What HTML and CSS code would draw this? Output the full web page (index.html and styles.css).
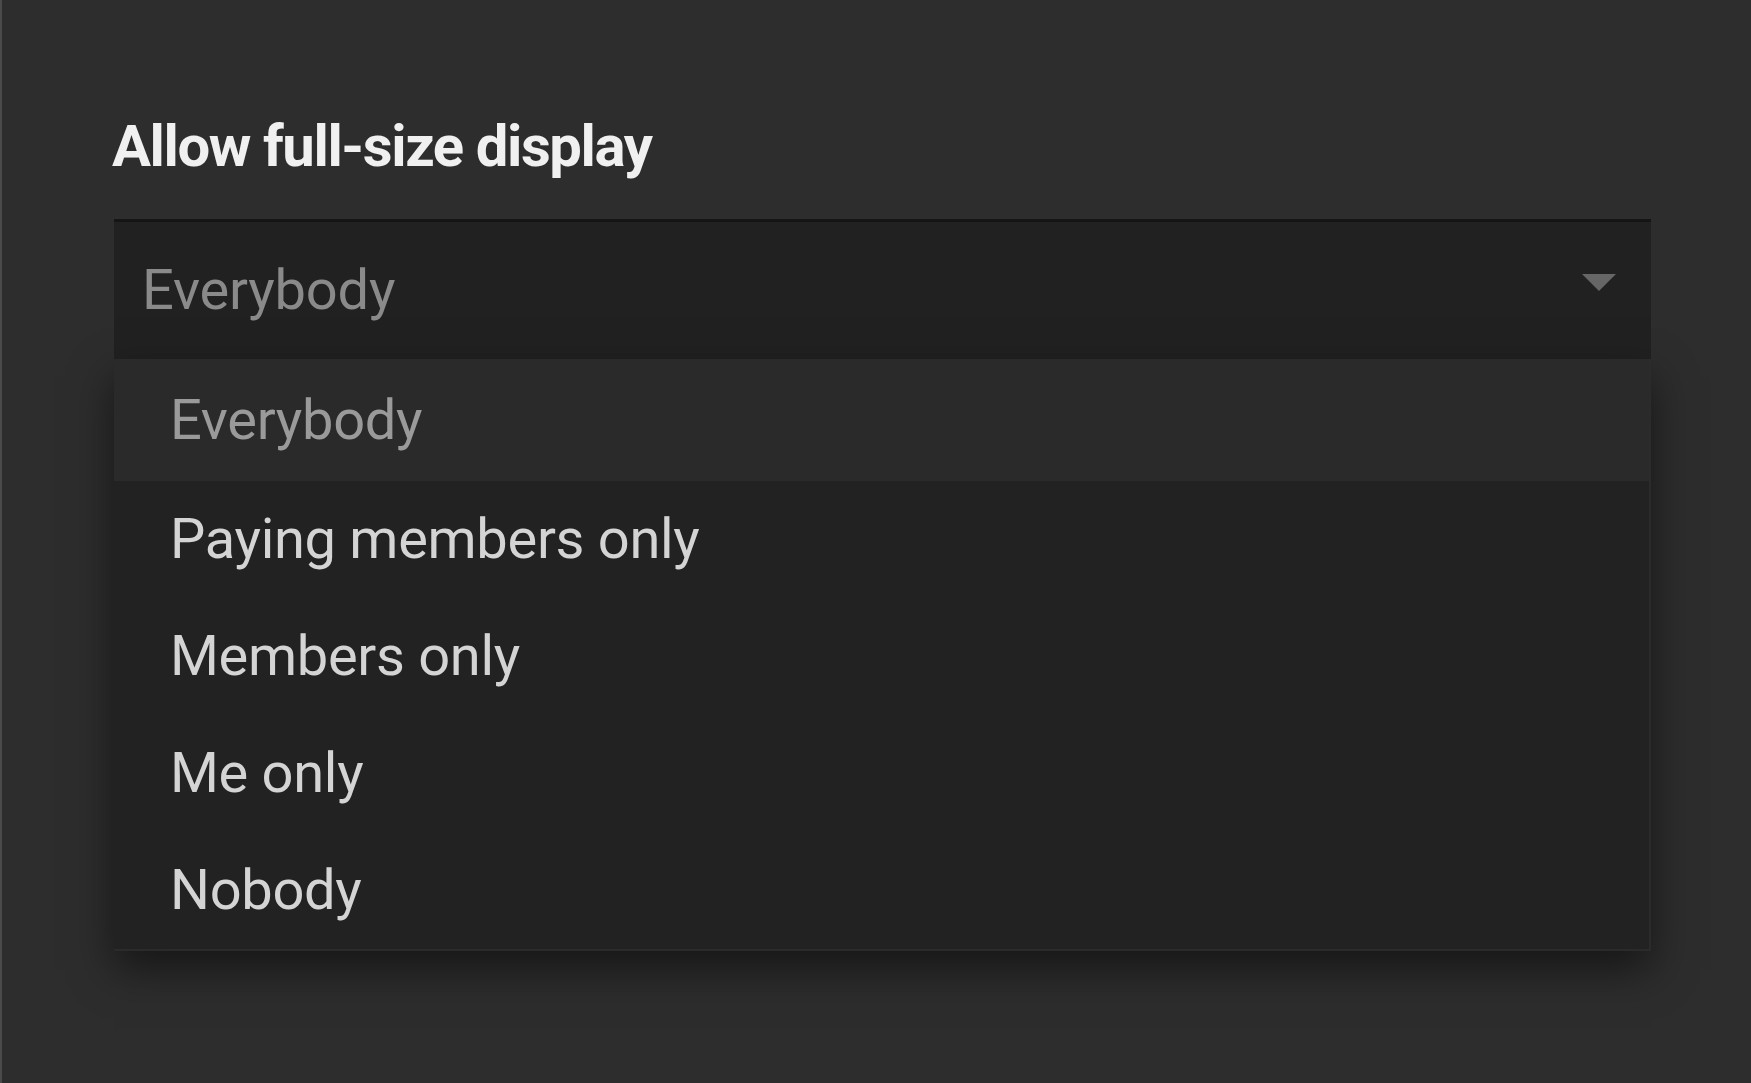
FILE: index.html
```html
<!DOCTYPE html>
<html lang="en">
<head>
<meta charset="utf-8">
<title>Allow full-size display</title>
<link rel="stylesheet" href="styles.css">
</head>
<body>
<div class="page">
  <h2 class="label">Allow full-size display</h2>
  <div class="field">
    <div class="select">
      <span class="select-value">Everybody</span>
      <svg class="caret" width="34" height="17" viewBox="0 0 34 17" aria-hidden="true">
        <polygon points="0,0 34,0 17,17" fill="#666666"/>
      </svg>
    </div>
    <ul class="menu">
      <li class="option option-selected">Everybody</li>
      <li class="option">Paying members only</li>
      <li class="option">Members only</li>
      <li class="option">Me only</li>
      <li class="option">Nobody</li>
    </ul>
  </div>
</div>
</body>
</html>
```
FILE: styles.css
```css
html, body {
  margin: 0;
  padding: 0;
  background: #2c2c2c;
}

.page {
  box-sizing: border-box;
  width: 1751px;
  height: 1083px;
  padding: 112px 0 0 112px;
  background: #2d2d2d;
  box-shadow: inset 2px 0 0 #4a4a4a;
  font-family: Roboto, "Liberation Sans", sans-serif;
  overflow: hidden;
}

.label {
  margin: 0;
  font-size: 58px;
  line-height: 69px;
  font-weight: 700;
  color: #f0f0f0;
  letter-spacing: -1.4px;
}

.field {
  margin: 38px 0 0 2px;
  width: 1537px;
}

.select {
  box-sizing: border-box;
  height: 140px;
  display: flex;
  justify-content: space-between;
  align-items: flex-start;
  padding: 0 35px 0 28px;
  background: #212121;
  border-top: 3px solid #151515;
}

.select-value {
  font-size: 56px;
  line-height: 137px;
  color: #8a8a8a;
  letter-spacing: -0.2px;
}

.caret {
  margin-top: 52px;
  flex: none;
}

.menu {
  list-style: none;
  margin: 0;
  padding: 0;
  background: #222222;
  border-right: 2px solid #2b2b2b;
  border-bottom: 2px solid #2b2b2b;
  box-shadow: 0 18px 40px rgba(0, 0, 0, 0.5);
}

.option {
  height: 117px;
  line-height: 117px;
  padding-left: 56px;
  font-size: 56px;
  color: #d4d4d4;
  letter-spacing: -0.3px;
}

.option-selected {
  height: 122px;
  line-height: 122px;
  background: #2a2a2a;
  color: #9a9a9a;
}
```
